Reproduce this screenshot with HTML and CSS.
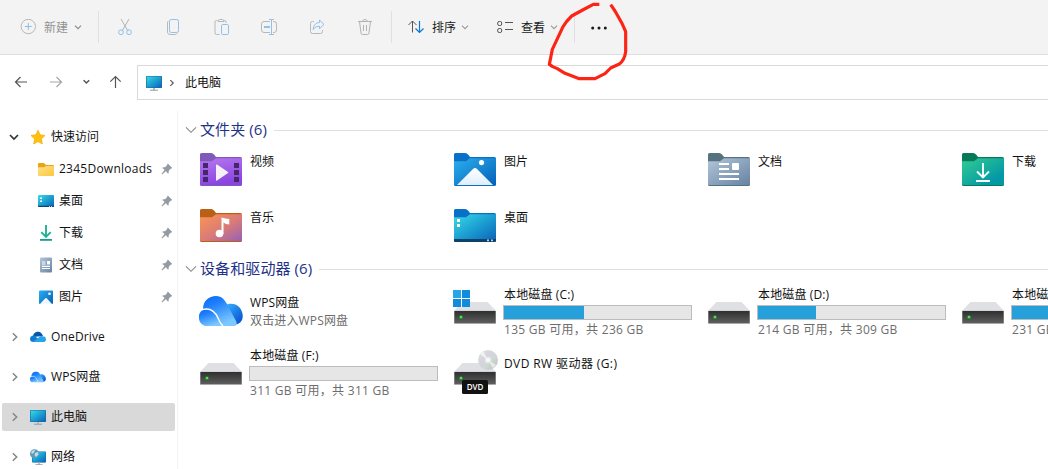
FILE: index.html
```html
<!DOCTYPE html>
<html lang="zh-CN">
<head>
<meta charset="utf-8">
<title>此电脑</title>
<link rel="stylesheet" href="styles.css">
</head>
<body>
<svg class="defs" width="0" height="0" aria-hidden="true">
  <defs>
    <linearGradient id="gVideo" x1="0" y1="0" x2=".3" y2="1"><stop offset="0" stop-color="#b678f0"/><stop offset="1" stop-color="#8a45e0"/></linearGradient>
    <linearGradient id="gMusic" x1="0" y1="0" x2="1" y2="1"><stop offset="0" stop-color="#fb9553"/><stop offset=".55" stop-color="#d97a78"/><stop offset="1" stop-color="#9460b8"/></linearGradient>
    <linearGradient id="gPic" x1="0" y1="0" x2="1" y2="1"><stop offset="0" stop-color="#2bb0ee"/><stop offset="1" stop-color="#0560b8"/></linearGradient>
    <linearGradient id="gDesk" x1="0" y1="0" x2="1" y2="1"><stop offset="0" stop-color="#38dce4"/><stop offset=".5" stop-color="#1c9fd2"/><stop offset="1" stop-color="#0b62b8"/></linearGradient>
    <linearGradient id="gDoc" x1="0" y1="0" x2="1" y2="1"><stop offset="0" stop-color="#b3c5da"/><stop offset="1" stop-color="#6683a2"/></linearGradient>
    <linearGradient id="gDown" x1="0" y1="0" x2="1" y2="1"><stop offset="0" stop-color="#33cc91"/><stop offset=".8" stop-color="#0398a6"/></linearGradient>
    <linearGradient id="gWhite" x1="0" y1="0" x2="0" y2="1"><stop offset="0" stop-color="#fff"/><stop offset="1" stop-color="#dfeefb"/></linearGradient>
    <linearGradient id="gYellow" x1="0" y1="0" x2="1" y2="1"><stop offset="0" stop-color="#ffe28a"/><stop offset="1" stop-color="#fbc63c"/></linearGradient>
    <linearGradient id="gDrive" x1="0" y1="0" x2="0" y2="1"><stop offset="0" stop-color="#2f2f2f"/><stop offset="1" stop-color="#5e5e5e"/></linearGradient>
    <linearGradient id="gCloud" x1="0" y1="0" x2=".5" y2="1"><stop offset="0" stop-color="#0a68f5"/><stop offset=".35" stop-color="#1e80fb"/><stop offset="1" stop-color="#7cc8ff"/></linearGradient>
    <linearGradient id="gCloudR" x1="0" y1="0" x2=".8" y2="1"><stop offset="0" stop-color="#38b2fb"/><stop offset="1" stop-color="#0650d2"/></linearGradient>
    <linearGradient id="gDisc" x1="0" y1="0" x2="1" y2="1"><stop offset="0" stop-color="#dde4e2"/><stop offset=".4" stop-color="#d6d3dc"/><stop offset=".6" stop-color="#cfd8d5"/><stop offset="1" stop-color="#b8bebd"/></linearGradient>

    <symbol id="chev" viewBox="0 0 8 8"><path d="M1 2.600 4 5.600 7 2.600" fill="none" stroke="currentColor" stroke-width="1.100"/></symbol>
    <symbol id="expand" viewBox="0 0 8 10"><path d="M1.8 1.2 5.700 5 1.800 8.800" fill="none" stroke="currentColor" stroke-width="1.500"/></symbol>
    <symbol id="pin" viewBox="0 0 12 12"><path d="M6.8.8 11 5 9.700 5.600 7.700 7.600 7.200 10.400 4.800 8.100 1.200 11.100.8 10.700 3.800 7.100 1.500 4.800 4.400 4.200 6.200 2.300Z" fill="#929ba3" stroke="#929ba3" stroke-width=".5" stroke-linejoin="round"/></symbol>
    <symbol id="monitor" viewBox="0 0 16 16"><rect x="0" y="1" width="16" height="12" rx=".8" fill="#19689e"/><rect x=".6" y="1.500" width="14.800" height="11" rx=".4" fill="url(#gDesk)"/><path d="M7 13h2v2H7z" fill="#b2bcc7"/><path d="M4 14.700h8v1H4z" fill="#8c99a8"/></symbol>
    <symbol id="drive" viewBox="0 0 42 22"><path d="M8.500 0h25L42 9H0Z" fill="#dfe0e4"/><rect y="8.700" width="42" height="13.300" rx=".8" fill="#a9a9a9"/><rect x=".5" y="9" width="41" height="12" fill="url(#gDrive)"/><circle cx="7" cy="15.200" r="1.900" fill="#1b9c2a"/><circle cx="7" cy="15" r="1.100" fill="#5df35b"/></symbol>
    <symbol id="tab" viewBox="0 0 42 33"><path d="M0 1.500Q0 0 1.500 0H11Q13 0 14.300 1.800L16 4H40.500Q42 4 42 5.500V31.500Q42 33 40.500 33H1.500Q0 33 0 31.500Z" fill="currentColor"/></symbol>
    <symbol id="wps" viewBox="0 0 44 30"><path d="M27 9C31 6.500 38 7.500 41 12 46 19 44 28 36.500 28.500Q28 25 27 9Z" fill="url(#gCloudR)"/><path d="M4 13C4 5 10 0 17 0 23 0 26 4 29 10L37 25Q39 29 35.500 30H23Q20 30 18 26 13 15 4 13Z" fill="url(#gCloud)"/><path d="M3 14.500Q13 10 18 22 21 29 24 30H8C0 30-3 19 3 14.500Z" fill="url(#gCloud)"/><path d="M3 13.600Q14 10.500 19 22 21.500 28 24 30" fill="none" stroke="#fff" stroke-width="1.500"/></symbol>
  </defs>
</svg>

<header class="toolbar">
  <div class="tool new"><svg width="16" height="16" fill="none"><circle cx="8.300" cy="7.500" r="7.200" stroke="#b8b8b8"/><path d="M8.300 4v7M4.800 7.500h7" stroke="#8dbfe6"/></svg><span>新建</span><svg class="chev" width="8" height="8"><use href="#chev"/></svg></div>
  <i class="sep"></i>
  <div class="actions">
    <svg viewBox="0 0 24 24"><g fill="none"><path d="m8 4 7 12.200M16 4 9 16.200" stroke="#b3b3b3"/><circle cx="8" cy="17.200" r="2.400" stroke="#8fc1ea"/><circle cx="16" cy="17.200" r="2.400" stroke="#8fc1ea"/></g></svg>
    <svg viewBox="0 0 24 24"><g fill="none"><path d="M7.500 6Q6.500 6.500 6.500 8v9q0 2.500 2.500 2.500h5.500q1 0 1.500-1" stroke="#b8b8b8"/><rect x="8.500" y="4.500" width="9" height="13" rx="1.800" stroke="#8fc1ea"/></g></svg>
    <svg viewBox="0 0 24 24"><g fill="none"><path d="M8.500 5.500h-1q-1.500 0-1.500 1.500v11q0 1.500 1.500 1.500h3M14.500 5.500h1q1.500 0 1.500 1.500v1M9 6.500q0-2 1.500-2h3q1.500 0 1.500 2Z" stroke="#b8b8b8"/><rect x="12.500" y="9.500" width="7" height="10" rx="1.200" stroke="#8fc1ea"/></g></svg>
    <svg viewBox="0 0 24 24"><g fill="none"><path d="M13 6.500H7q-2.500 0-2.500 2.500v6q0 2.500 2.500 2.500h6M16 6.500h1q2.500 0 2.500 2.500v6q0 2.500-2.500 2.500h-1" stroke="#b8b8b8"/><path d="M14.500 4.500v15M12 4.500h5M12 19.500h5" stroke="#8fc1ea"/><path d="M7 12h6" stroke="#8fc1ea" stroke-width="2"/></g></svg>
    <svg viewBox="0 0 24 24"><g fill="none"><path d="M9 6.500H7.500q-2 0-2 2v8q0 2 2 2h8q2 0 2-2v-1.500" stroke="#b8b8b8"/><path d="M14.500 5 19 9.400l-4.500 4.300v-2.500Q10.500 11 8 14.500 9 7.500 14.500 7.500Z" stroke="#8fc1ea" stroke-linejoin="round"/></g></svg>
    <svg viewBox="0 0 24 24"><g fill="none" stroke="#b3b3b3"><path d="M5 6.500h14M9.500 6.500Q10 4.500 12 4.500t2.500 2M6.500 6.500 8 18q.2 1.500 1.600 1.500h4.800q1.400 0 1.600-1.500L17.500 6.500M10.500 10v6M13.500 10v6"/></g></svg>
  </div>
  <i class="sep"></i>
  <div class="tool sort"><svg width="17" height="16" fill="none"><path d="M4.500 13.500V2M.5 6l4-4 4 4" stroke="#555"/><path d="M11.500 2v11.500M7.500 9.500l4 4 4-4" stroke="#0f78cc" stroke-width="1.200"/></svg><span>排序</span><svg class="chev" width="8" height="8"><use href="#chev"/></svg></div>
  <div class="tool view"><svg width="17" height="16" fill="none" stroke="#555"><rect x=".7" y="2.500" width="4" height="4" rx="1.500"/><rect x=".7" y="9.500" width="4" height="4" rx="1.500"/><path d="M8 3.500h8M8 10.500h8"/></svg><span>查看</span><svg class="chev" width="8" height="8"><use href="#chev"/></svg></div>
  <i class="sep"></i>
  <svg class="more" width="18" height="6"><circle cx="2.700" cy="3" r="1.500"/><circle cx="9" cy="3" r="1.500"/><circle cx="15.300" cy="3" r="1.500"/></svg>
</header>

<nav class="navbar">
  <svg class="arrows" width="122" height="34" fill="none"><g stroke="#555" stroke-width="1.200"><path d="M27 17H15.500M20.500 12l-5 5 5 5"/><path d="M50 17h11.500M56.500 12l5 5-5 5" stroke="#a5a5a5"/><path d="m83.600 15.200 2.800 2.800 2.800-2.800" stroke-width="1.500"/><path d="M115.500 23V11.500M110.300 16.700l5.200-5.200 5.200 5.200"/></g></svg>
  <div class="address"><svg width="16" height="16"><use href="#monitor"/></svg><svg class="crumb" width="6" height="8"><use href="#expand"/></svg><span>此电脑</span></div>
</nav>

<div class="body">
  <aside class="sidebar">
    <div class="item top open"><svg class="arrow" width="10" height="8"><path d="m1 2 4 4 4-4" fill="none" stroke="#333" stroke-width="1.700"/></svg><svg class="ico" viewBox="0 0 16 16"><path d="m8 1.300 2.100 4.500 4.900.7-3.600 3.500.9 4.900L8 12.500l-4.300 2.400.9-4.900L1 6.500l4.900-.7Z" fill="#ffc20a" stroke="#f7ad0c" stroke-width=".8" stroke-linejoin="round"/></svg><span>快速访问</span></div>
    <div class="item sub"><svg class="ico" viewBox="0 0 16 16"><path d="M0 3.200Q0 2 1.200 2H6l2 2h6.800Q16 4 16 5v4H0Z" fill="#e9a510"/><path d="M0 6.200h6L8 5h7q1 0 1 1v8q0 1-1 1H1q-1 0-1-1Z" fill="url(#gYellow)"/></svg><span class="dl">2345Downloads</span><svg class="pin"><use href="#pin"/></svg></div>
    <div class="item sub"><svg class="ico" viewBox="0 0 16 16"><rect y="2" width="16" height="12" rx="1" fill="url(#gDesk)"/><path d="M0 12.800h16v.3q0 .9-.9.9H.9Q0 14 0 13.100Z" fill="#0a4574"/><path d="M2 4.500h2v1.500H2zM2 7.500h2V9H2zM11 13h1v.7h-1zM13 13h1v.7h-1z" fill="#fff"/></svg><span>桌面</span><svg class="pin"><use href="#pin"/></svg></div>
    <div class="item sub"><svg class="ico" viewBox="0 0 16 16"><path d="M8 0v11.500M3.300 7.200 8 12l4.700-4.800" fill="none" stroke="#1db491" stroke-width="1.900"/><path d="M2 14h12v1.800H2z" fill="#149f91"/></svg><span>下载</span><svg class="pin"><use href="#pin"/></svg></div>
    <div class="item sub"><svg class="ico" viewBox="0 0 16 16"><rect x="2" y=".5" width="12" height="15" rx="1" fill="url(#gDoc)"/><path d="M4 4.500h3.500v1H4zM4 6.500h3.500v1H4zM4 8.700h8v1.200H4zM4 11h8v1H4zM9 4h3v3.500H9z" fill="#fff"/></svg><span>文档</span><svg class="pin"><use href="#pin"/></svg></div>
    <div class="item sub"><svg class="ico" viewBox="0 0 16 16"><rect x="1" y="1.500" width="14" height="13.500" rx="1" fill="url(#gPic)"/><path d="M2 15 7.300 9.200q.7-.6 1.400 0L14 15Z" fill="#f2f8ff"/><circle cx="11.500" cy="4.800" r="1.300" fill="#fff"/></svg><span>图片</span><svg class="pin"><use href="#pin"/></svg></div>
    <div class="item top roots"><svg class="arrow side"><use href="#expand"/></svg><svg class="ico" viewBox="0 0 16 16"><path d="M3 8C3 4 6 2.700 8 2.700q3.500 0 5 4.300Z" fill="#0759ad"/><path d="M3.500 13Q0 13 0 10q0-3 4-3.400L11 12Z" fill="#107bd5"/><path d="M3 13 10.500 7q5.500 0 5.500 3.200 0 2.800-3 2.800Z" fill="#27a5ea"/></svg><span class="od">OneDrive</span></div>
    <div class="item top"><svg class="arrow side"><use href="#expand"/></svg><svg class="ico" viewBox="0 -1 16 16"><use href="#wps" x="0" y="1.500" width="16" height="11"/></svg><span class="wl">WPS网盘</span></div>
    <div class="item top selected"><svg class="arrow side"><use href="#expand"/></svg><svg class="ico"><use href="#monitor"/></svg><span>此电脑</span></div>
    <div class="item top"><svg class="arrow side"><use href="#expand"/></svg><svg class="ico" viewBox="0 0 16 16"><g transform="translate(2 1.500) scale(.875 .93)"><use href="#monitor" width="16" height="16"/></g><circle cx="4.500" cy="4.700" r="4.500" fill="#5a9abb"/><path d="M1 3q2-2.600 4-2L4 3.500 2 5ZM5 4l3-1 .5 2.500L6 8 4.500 6Z" fill="#c3dee7"/></svg><span>网络</span></div>
  </aside>

  <main class="content">
    <h2 class="group first"><svg width="12" height="8"><path d="m1 1.300 5 5 5-5" fill="none" stroke="#888" stroke-width="1.100"/></svg><span>文件夹 (6)</span><i></i></h2>
    <section class="grid folders">
      <div class="tile"><svg class="pic" viewBox="0 0 51 56"><g transform="translate(2 9)"><use href="#tab" width="42" height="33" color="#8059ba"/><path d="M0 8.200h12L16 5.200h26v26q0 .8-1 .8H1q-1 0-1-.8Z" fill="url(#gVideo)"/><path d="M3 10h5v5H3zM3 17h5v5H3zM3 24h5v5H3zM34 10h5v5h-5zM34 17h5v5h-5zM34 24h5v5h-5z" fill="#442768"/><path d="M16 12v15q0 1 1 .4l11-7.300q.7-.6 0-1.200l-11-7.300q-1-.6-1 .4Z" fill="#f4f1f8"/></g></svg><div class="label">视频</div></div>
      <div class="tile"><svg class="pic" viewBox="0 0 51 56"><g transform="translate(2 9)"><use href="#tab" width="42" height="33" color="#0870c8"/><path d="M0 8.200h12L16 5.200h26v26q0 .8-1 .8H1q-1 0-1-.8Z" fill="url(#gPic)"/><path d="M3 32 19 16q2-2 4 0l16 16Z" fill="url(#gWhite)"/><circle cx="27.500" cy="9.600" r="2.600" fill="#fff"/></g></svg><div class="label">图片</div></div>
      <div class="tile"><svg class="pic" viewBox="0 0 51 56"><g transform="translate(2 9)"><use href="#tab" width="42" height="33" color="#56727f"/><path d="M0 8.200h12L16 5.200h26v26q0 .8-1 .8H1q-1 0-1-.8Z" fill="url(#gDoc)"/><path d="M11 10h10v2H11zM11 15h10v2H11zM11 20h20v2H11zM11 25h20v2H11z" fill="#fff"/><rect x="24" y="10" width="7" height="7" rx="1" fill="#fff"/></g></svg><div class="label">文档</div></div>
      <div class="tile"><svg class="pic" viewBox="0 0 51 56"><g transform="translate(2 9)"><use href="#tab" width="42" height="33" color="#06795b"/><path d="M0 8.200h12L16 5.200h26v26q0 .8-1 .8H1q-1 0-1-.8Z" fill="url(#gDown)"/><path d="M21 10v14M15 18.500l6 6 6-6M14 28h14" fill="none" stroke="#f7fffc" stroke-width="1.900"/></g></svg><div class="label">下载</div></div>
      <div class="tile"><svg class="pic" viewBox="0 0 51 56"><g transform="translate(2 9)"><use href="#tab" width="42" height="33" color="#b96016"/><path d="M0 8.200h12L16 5.200h26v26q0 .8-1 .8H1q-1 0-1-.8Z" fill="url(#gMusic)"/><circle cx="19.500" cy="24.500" r="3.800" fill="#fff"/><path d="M21.500 25V8.500q4 1 7.800 1.500v5.500q-3.800 0-5.800-2V25Z" fill="#fff"/></g></svg><div class="label">音乐</div></div>
      <div class="tile"><svg class="pic" viewBox="0 0 51 56"><g transform="translate(2 9)"><use href="#tab" width="42" height="33" color="#0870c8"/><path d="M0 8.200h12L16 5.200h26v26q0 .8-1 .8H1q-1 0-1-.8Z" fill="url(#gDesk)"/><path d="M0 30h42v1.500q0 1.500-1.500 1.500h-39Q0 33 0 31.500Z" fill="#0d4167"/><path d="M3 10h3v3H3zM3 15h3v3H3z" fill="#fff"/><path d="M33 30.500h2v1.700h-2zM37 30.500h2v1.700h-2z" fill="#b7d3e6"/></g></svg><div class="label">桌面</div></div>
    </section>

    <h2 class="group second"><svg width="12" height="8"><path d="m1 1.300 5 5 5-5" fill="none" stroke="#888" stroke-width="1.100"/></svg><span>设备和驱动器 (6)</span><i></i></h2>
    <section class="grid drives">
      <div class="tile"><svg class="pic" viewBox="0 0 51 61"><use href="#wps" x="1" y="12" width="44" height="30"/></svg><div class="cloud"><div>WPS网盘</div><div class="info">双击进入WPS网盘</div></div></div>
      <div class="tile"><svg class="pic" viewBox="0 0 51 61"><use href="#drive" x="2" y="18" width="42" height="22"/><path d="M1 6h17v17H1z" fill="#fff"/><path d="M1 6h8v8H1zM10 6h8v8h-8zM1 15h8v8H1zM10 15h8v8h-8z" fill="#118bdc"/><path d="M1 6h8v8H1z" fill="#23a7e9"/></svg><div class="disk"><div class="name">本地磁盘 (C:)</div><div class="bar"><b style="width:43%"></b></div><div class="info">135 GB 可用，共 236 GB</div></div></div>
      <div class="tile"><svg class="pic" viewBox="0 0 51 61"><use href="#drive" x="2" y="18" width="42" height="22"/></svg><div class="disk"><div class="name">本地磁盘 (D:)</div><div class="bar"><b style="width:31.200%"></b></div><div class="info">214 GB 可用，共 309 GB</div></div></div>
      <div class="tile"><svg class="pic" viewBox="0 0 51 61"><use href="#drive" x="2" y="18" width="42" height="22"/></svg><div class="disk"><div class="name">本地磁盘 (E:)</div><div class="bar"><b style="width:25%"></b></div><div class="info">231 GB 可用，共 309 GB</div></div></div>
      <div class="tile"><svg class="pic" viewBox="0 0 51 61"><use href="#drive" x="2" y="18" width="42" height="22"/></svg><div class="disk"><div class="name">本地磁盘 (F:)</div><div class="bar"></div><div class="info">311 GB 可用，共 311 GB</div></div></div>
      <div class="tile"><svg class="pic" viewBox="0 0 51 61"><use href="#drive" x="2" y="18" width="42" height="22"/><circle cx="36" cy="15" r="10" fill="url(#gDisc)"/><path d="m36 15-8-6 3-3Z" fill="#f2f4f4"/><path d="m36 15 5 8 3-3Z" fill="#e8eaeb"/><circle cx="36" cy="15" r="3.200" fill="#e9ecec"/><circle cx="36" cy="15" r="1.500" fill="#fff"/><rect x="10" y="35" width="26" height="14" rx="1.500" fill="#121212"/><text class="dvd" x="23" y="45.200">DVD</text></svg><div class="label dv">DVD RW 驱动器 (G:)</div></div>
    </section>
  </main>
</div>
<svg class="ink" viewBox="0 0 600 330"><path d="M358 13H340L308 30 275 48Q258 64 248 82L235 110 217 148 208 193 218 200 232 206 255 220 298 236H345L375 221 392 204 418 192Q434 180 437 155V95L425 68 405 33 392 14"/></svg>
</body>
</html>
```

FILE: styles.css
```css
* { box-sizing: border-box; }
body { margin: 0; width: 1048px; height: 469px; overflow: hidden; position: relative; display: flex; flex-direction: column; background: #fff; color: #111; font: 12px/16px "Open Sans", "Noto Sans CJK SC", sans-serif; }
svg { display: block; flex: none; }
.defs { position: absolute; }
span, .name, .info, .label { white-space: nowrap; }

.toolbar { flex: none; display: flex; align-items: center; height: 55px; background: #f3f3f3; border-bottom: 1px solid #dfdfdf; }
.sep { width: 1px; height: 32px; background: #e0e0e0; }
.tool { display: flex; align-items: center; color: #1a1a1a; }
.tool span { padding-top: 2px; }
.tool .chev { color: #999; }
.tool.new { width: 98px; padding-left: 20px; color: #929292; }
.new span { margin: 0 6px 0 8px; }
.new .chev { color: #888; }
.actions { display: flex; margin: 0 2px; }
.actions svg { width: 24px; height: 24px; margin: 0 12px; }
.sort { width: 105px; padding-left: 16px; }
.view { width: 77px; }
.sort span, .view span { margin: 0 5px 0 7px; }
.more { margin: 2px 0 0 15px; fill: #1a1a1a; }

.navbar { flex: none; display: flex; height: 56px; padding-top: 10px; }
.arrows { margin-right: 15px; }
.address { flex: 1; display: flex; align-items: center; height: 35px; padding-left: 8px; border: 1px solid #d9d9d9; border-right: 0; }
.crumb { margin: 0 10px 0 7px; color: #555; }

.body { flex: 1; display: flex; min-height: 0; }
.sidebar { width: 178px; border-right: 1px solid #f3f3f3; padding: 10px 2px 0; overflow: hidden; }
.item { display: flex; align-items: center; height: 32px; }
.item .ico { width: 16px; height: 16px; }
.item span { flex: 1; margin-left: 5px; }
.item .dl { letter-spacing: .25px; }
.item .od, .item .wl { letter-spacing: .15px; }
.item.top { height: 28px; margin: 0 0 12px; padding-left: 7px; border-radius: 2px; }
.item.open { height: 32px; margin: 0; }
.item.roots { margin-top: 10px; }
.sub { padding: 0 2px 0 36px; }
.arrow { margin-right: 11px; }
.arrow.side { width: 8px; height: 10px; margin: 0 11px 0 2px; color: #858585; }
.item.selected { background: #d9d9d9; }
.pin { width: 12px; height: 12px; }

.content { flex: 1; min-width: 0; padding: 10px 0 0 7px; overflow: hidden; }
.group { display: flex; align-items: center; height: 18px; margin: 0; font-size: 15px; font-weight: 400; line-height: 18px; letter-spacing: .1px; color: #1e3287; }
.group span { margin: 0 7px 0 3px; padding-bottom: 2px; }
.group i { flex: 1; height: 1px; background: #e0e0e0; }
.group.first { margin-bottom: 5px; }
.group.second { margin: 4px 0 6px; }
.grid { display: grid; grid-template-columns: repeat(4, 254px); margin-left: 13px; }
.folders { grid-auto-rows: 56px; }
.drives { grid-auto-rows: 61px; }
.tile { display: flex; }
.pic { width: 51px; height: 100%; }
.label { padding: 10px 0 0 1px; }
.dv { padding-top: 11px; letter-spacing: .4px; }
.cloud { padding: 10px 0 0 1px; line-height: 18px; letter-spacing: .12px; }
.disk { padding-top: 3px; }
.name, .info { padding-left: 1px; }
.name { letter-spacing: .13px; }
.info { color: #6d6d6d; letter-spacing: .28px; }
.cloud .info { padding: 0; letter-spacing: .15px; }
.bar { width: 189px; height: 15px; margin: 2px 0; border: 1px solid #bcbcbc; background: #e6e6e6; }
.bar b { display: block; height: 13px; background: #26a0da; }
.dvd { fill: #fff; font: 600 8px "Open Sans", sans-serif; text-anchor: middle; }
.ink { position: absolute; left: 480px; top: 0; width: 200px; height: 110px; pointer-events: none; }
.ink path { fill: none; stroke: #fb2415; stroke-width: 9.500; stroke-linejoin: round; }
```
